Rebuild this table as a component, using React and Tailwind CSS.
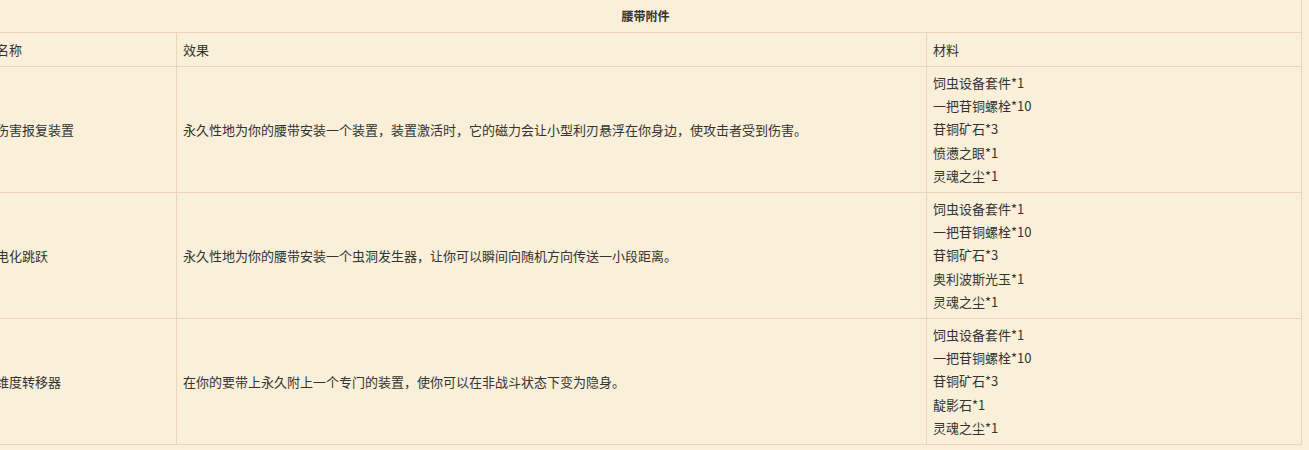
// 腰带附件 표 — 왼쪽이 살짝 잘린 상태 그대로 재현
const ROWS = [
  {
    name: '伤害报复装置',
    effect: '永久性地为你的腰带安装一个装置，装置激活时，它的磁力会让小型利刃悬浮在你身边，使攻击者受到伤害。',
    mats: ['饲虫设备套件*1', '一把苷铜螺栓*10', '苷铜矿石*3', '愤懑之眼*1', '灵魂之尘*1'],
  },
  {
    name: '电化跳跃',
    effect: '永久性地为你的腰带安装一个虫洞发生器，让你可以瞬间向随机方向传送一小段距离。',
    mats: ['饲虫设备套件*1', '一把苷铜螺栓*10', '苷铜矿石*3', '奥利波斯光玉*1', '灵魂之尘*1'],
  },
  {
    name: '维度转移器',
    effect: '在你的要带上永久附上一个专门的装置，使你可以在非战斗状态下变为隐身。',
    mats: ['饲虫设备套件*1', '一把苷铜螺栓*10', '苷铜矿石*3', '靛影石*1', '灵魂之尘*1'],
  },
]

const cell = 'border-r border-b border-[#edd5b9] pl-[6px]'

export default function App() {
  return (
    <div
      className="w-[1309px] h-[450px] overflow-hidden bg-[#faefd8] text-[13px] text-[#333]"
      style={{ fontFamily: '"Noto Sans CJK SC", "Noto Sans", sans-serif' }}
    >
      <div className="ml-[-10px] w-[1312px] grid grid-cols-[187px_750px_375px]">
        <div className="col-span-3 h-[33px] border-r border-b border-[#edd5b9] flex items-center justify-center font-bold text-[12px]">
          腰带附件
        </div>

        <div className={`${cell} h-[34px] flex items-center`}>名称</div>
        <div className={`${cell} h-[34px] flex items-center`}>效果</div>
        <div className={`${cell} h-[34px] flex items-center`}>材料</div>

        {ROWS.map(r => (
          <div key={r.name} className="contents">
            <div className={`${cell} h-[126px] flex items-center`}>{r.name}</div>
            <div className={`${cell} h-[126px] flex items-center`}>{r.effect}</div>
            <div className={`${cell} h-[126px] pt-[4px] leading-[23.2px]`}>
              {r.mats.map(m => <div key={m}>{m}</div>)}
            </div>
          </div>
        ))}
      </div>
    </div>
  )
}
